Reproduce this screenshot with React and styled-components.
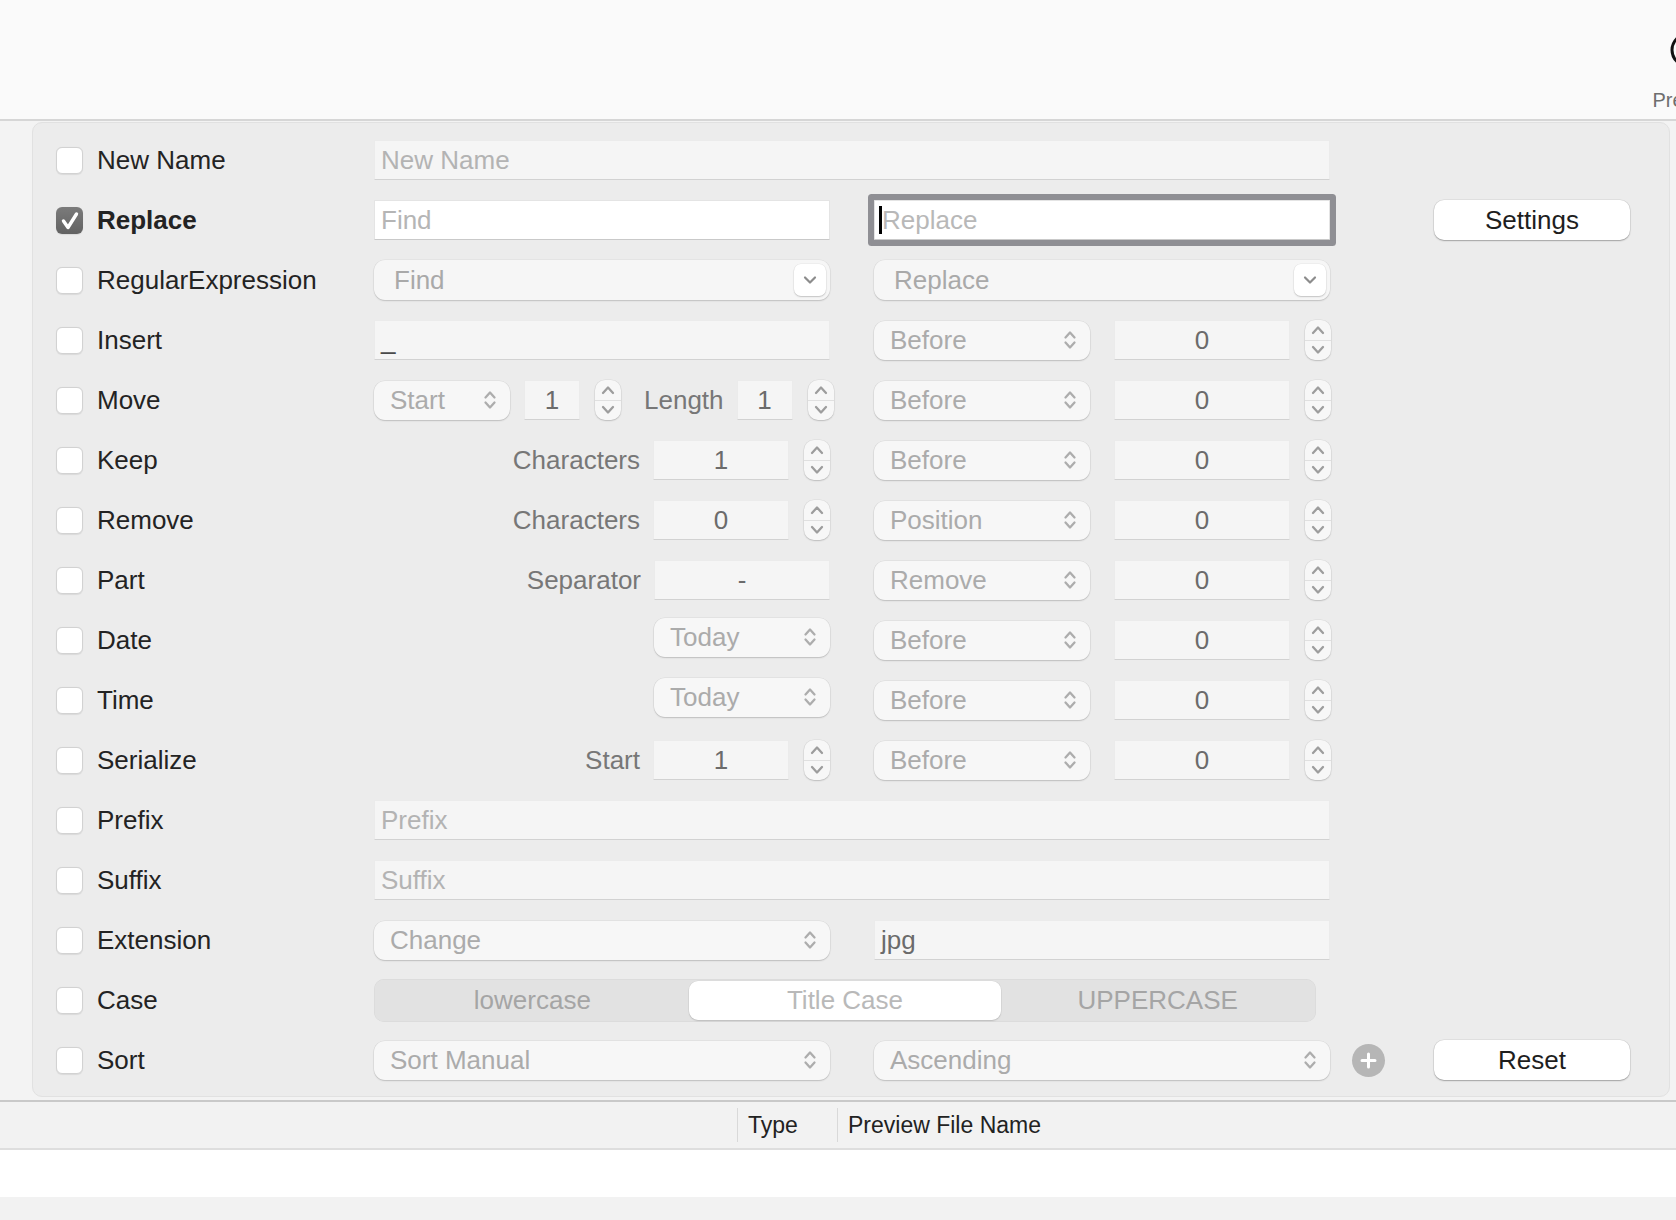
import React from "react";
import styled, { createGlobalStyle } from "styled-components";

const GlobalStyle = createGlobalStyle`
  html, body {
    margin: 0;
    padding: 0;
  }
  body {
    background: #f3f3f3;
    font-family: "Liberation Sans", Arial, sans-serif;
    -webkit-font-smoothing: antialiased;
  }
  * {
    box-sizing: border-box;
  }
`;

const UpDown = ({ color = "#adadad" }) => (
  <svg width="14" height="22" viewBox="0 0 14 22" fill="none">
    <path d="M2.5 8.5 L7 3.5 L11.5 8.5" stroke={color} strokeWidth="2.3" strokeLinecap="round" strokeLinejoin="round" />
    <path d="M2.5 13.5 L7 18.5 L11.5 13.5" stroke={color} strokeWidth="2.3" strokeLinecap="round" strokeLinejoin="round" />
  </svg>
);

const ChevronDown = () => (
  <svg width="14" height="10" viewBox="0 0 14 10" fill="none">
    <path d="M2 2.5 L7 7.5 L12 2.5" stroke="#8c8c8c" strokeWidth="2.2" strokeLinecap="round" strokeLinejoin="round" />
  </svg>
);

const ChevronSmall = ({ up }) => (
  <svg width="14" height="10" viewBox="0 0 14 10" fill="none">
    <path
      d={up ? "M2 8 L7 2.5 L12 8" : "M2 2 L7 7.5 L12 2"}
      stroke="#9d9d9d"
      strokeWidth="2.3"
      strokeLinecap="round"
      strokeLinejoin="round"
    />
  </svg>
);

const CheckMark = () => (
  <svg width="27" height="27" viewBox="0 0 27 27" fill="none">
    <path d="M7.5 14 L12 20.5 L20.5 7" stroke="#fff" strokeWidth="3.4" strokeLinecap="round" strokeLinejoin="round" />
  </svg>
);

const PlusMark = () => (
  <svg width="17" height="17" viewBox="0 0 17 17" fill="none">
    <path d="M8.5 2 V15 M2 8.5 H15" stroke="#fff" strokeWidth="3" strokeLinecap="round" />
  </svg>
);

// number field with its up/down stepper
const NumberSpin = ({ w, value }) => (
  <SpinWrap>
    <Field $w={w} $center $tone="#6b6b6b">{value}</Field>
    <Stepper>
      <StepHalf><ChevronSmall up /></StepHalf>
      <StepHalf $bottom><ChevronSmall /></StepHalf>
    </Stepper>
  </SpinWrap>
);

const PopupButton = ({ w, label, mr, lift }) => (
  <Popup $w={w} $mr={mr} $lift={lift}>
    <span>{label}</span>
    <UpDown />
  </Popup>
);

const PositionGroup = ({ label }) => (
  <Side>
    <PopupButton w={216} label={label} mr={24} />
    <NumberSpin w={176} value="0" />
  </Side>
);

const RuleRow = ({ label, checked, children }) => (
  <Row>
    <Lead>
      <Check $on={checked}>{checked && <CheckMark />}</Check>
      <RowLabel $bold={checked}>{label}</RowLabel>
    </Lead>
    {children}
  </Row>
);

export default function App() {
  return (
    <>
      <GlobalStyle />
      <Window>
        <Toolbar>
          <ToolItem>
            <svg width="36" height="36" viewBox="0 0 36 36" fill="none">
              <circle cx="18" cy="18" r="16" stroke="#111" strokeWidth="3" />
            </svg>
            <ToolLabel>Preview</ToolLabel>
          </ToolItem>
        </Toolbar>

        <Panel>
          <RuleRow label="New Name">
            <Main $w={956}>
              <Field $w={956} $tone="#b3b3b3">New Name</Field>
            </Main>
          </RuleRow>

          <RuleRow label="Replace" checked>
            <Main>
              <Field $w={456} $white $tone="#b5b5b5">Find</Field>
            </Main>
            <Side>
              <Field $w={456} $white $focus $tone="#b8b8b8">
                <Caret />
                Replace
              </Field>
            </Side>
            <Extra />
            <Action>
              <PushButton>Settings</PushButton>
            </Action>
          </RuleRow>

          <RuleRow label="RegularExpression">
            <Main>
              <Combo>
                <ComboText>Find</ComboText>
                <ComboButton><ChevronDown /></ComboButton>
              </Combo>
            </Main>
            <Side>
              <Combo>
                <ComboText>Replace</ComboText>
                <ComboButton><ChevronDown /></ComboButton>
              </Combo>
            </Side>
          </RuleRow>

          <RuleRow label="Insert">
            <Main>
              <Field $w={456} $tone="#4a4a4a">_</Field>
            </Main>
            <PositionGroup label="Before" />
          </RuleRow>

          <RuleRow label="Move">
            <Main>
              <PopupButton w={136} label="Start" mr={14} />
              <NumberSpin w={56} value="1" />
              <SubLabel $ml={23}>Length</SubLabel>
              <NumberSpin w={56} value="1" />
            </Main>
            <PositionGroup label="Before" />
          </RuleRow>

          <RuleRow label="Keep">
            <Main $end>
              <SubLabel>Characters</SubLabel>
              <NumberSpin w={136} value="1" />
            </Main>
            <PositionGroup label="Before" />
          </RuleRow>

          <RuleRow label="Remove">
            <Main $end>
              <SubLabel>Characters</SubLabel>
              <NumberSpin w={136} value="0" />
            </Main>
            <PositionGroup label="Position" />
          </RuleRow>

          <RuleRow label="Part">
            <Main $end>
              <SubLabel>Separator</SubLabel>
              <Field $w={176} $center $tone="#6b6b6b">-</Field>
            </Main>
            <PositionGroup label="Remove" />
          </RuleRow>

          <RuleRow label="Date">
            <Main $end>
              <PopupButton w={176} label="Today" lift />
            </Main>
            <PositionGroup label="Before" />
          </RuleRow>

          <RuleRow label="Time">
            <Main $end>
              <PopupButton w={176} label="Today" lift />
            </Main>
            <PositionGroup label="Before" />
          </RuleRow>

          <RuleRow label="Serialize">
            <Main $end>
              <SubLabel>Start</SubLabel>
              <NumberSpin w={136} value="1" />
            </Main>
            <PositionGroup label="Before" />
          </RuleRow>

          <RuleRow label="Prefix">
            <Main $w={956}>
              <Field $w={956} $tone="#b3b3b3">Prefix</Field>
            </Main>
          </RuleRow>

          <RuleRow label="Suffix">
            <Main $w={956}>
              <Field $w={956} $tone="#b3b3b3">Suffix</Field>
            </Main>
          </RuleRow>

          <RuleRow label="Extension">
            <Main>
              <PopupButton w={456} label="Change" />
            </Main>
            <Side>
              <Field $w={456} $tone="#6b6b6b">jpg</Field>
            </Side>
          </RuleRow>

          <RuleRow label="Case">
            <Main $w={942}>
              <Segmented>
                <Segment>lowercase</Segment>
                <Segment $on>Title Case</Segment>
                <Segment>UPPERCASE</Segment>
              </Segmented>
            </Main>
          </RuleRow>

          <RuleRow label="Sort">
            <Main>
              <PopupButton w={456} label="Sort Manual" />
            </Main>
            <Side>
              <PopupButton w={456} label="Ascending" />
            </Side>
            <Extra>
              <AddButton><PlusMark /></AddButton>
            </Extra>
            <Action>
              <PushButton>Reset</PushButton>
            </Action>
          </RuleRow>
        </Panel>

        <TableHeader>
          <HeaderCell $w={737} $plain />
          <HeaderCell $w={100}>Type</HeaderCell>
          <HeaderCell $w={400}>Preview File Name</HeaderCell>
        </TableHeader>
        <ListBody />
        <Footer />
      </Window>
    </>
  );
}

const Window = styled.div`
  width: 1676px;
  height: 1220px;
  display: flex;
  flex-direction: column;
  overflow: hidden;
  background: #f3f3f3;
`;

const Toolbar = styled.div`
  flex: none;
  height: 121px;
  background: #fafafa;
  border-bottom: 2px solid #d6d6d6;
  display: flex;
  justify-content: flex-end;
  align-items: flex-start;
  overflow: hidden;
`;

const ToolItem = styled.div`
  flex: none;
  width: 72px;
  margin-right: -48px;
  padding-top: 32px;
  display: flex;
  flex-direction: column;
  align-items: center;
  gap: 20px;
`;

const ToolLabel = styled.div`
  font-size: 20px;
  line-height: 24px;
  color: #6e6e6e;
`;

const Panel = styled.div`
  flex: none;
  margin: 1px 6px 3px 32px;
  padding: 7px 0 6px 23px;
  background: #ececec;
  border: 1px solid #e1e1e1;
  border-radius: 10px;
  display: flex;
  flex-direction: column;
`;

const Row = styled.div`
  height: 60px;
  display: flex;
  align-items: center;
`;

const Lead = styled.div`
  flex: none;
  width: 318px;
  display: flex;
  align-items: center;
  gap: 14px;
`;

const Check = styled.div`
  width: 27px;
  height: 27px;
  border-radius: 6px;
  background: ${(p) => (p.$on ? "linear-gradient(#7b7b7b, #626262)" : "#fff")};
  border: ${(p) => (p.$on ? "none" : "1px solid #d2d2d2")};
  box-shadow: 0 0.5px 1px rgba(0, 0, 0, 0.08);
  display: flex;
  align-items: center;
  justify-content: center;
`;

const RowLabel = styled.div`
  font-size: 26px;
  color: #232323;
  font-weight: ${(p) => (p.$bold ? 700 : 400)};
  white-space: nowrap;
`;

const Main = styled.div`
  flex: none;
  width: ${(p) => p.$w || 456}px;
  display: flex;
  align-items: center;
  justify-content: ${(p) => (p.$end ? "flex-end" : "flex-start")};
`;

const Side = styled.div`
  flex: none;
  width: 456px;
  margin-left: 44px;
  display: flex;
  align-items: center;
`;

const Extra = styled.div`
  flex: none;
  width: 104px;
  padding-left: 22px;
  display: flex;
  align-items: center;
`;

const Action = styled.div`
  flex: none;
  width: 196px;
`;

const Field = styled.div`
  flex: none;
  width: ${(p) => p.$w}px;
  height: 40px;
  padding: 0 6px;
  background: ${(p) => (p.$white ? "#fff" : "#f5f5f5")};
  border: 1px solid ${(p) => (p.$white ? "#e4e4e4" : "#ebebeb")};
  border-bottom-color: ${(p) => (p.$white ? "#c9c9c9" : "#d2d2d2")};
  border-radius: 1px;
  box-shadow: ${(p) => (p.$focus ? "0 0 0 6px #8f8f94" : "none")};
  display: flex;
  align-items: center;
  justify-content: ${(p) => (p.$center ? "center" : "flex-start")};
  font-size: 26px;
  color: ${(p) => p.$tone};
  white-space: nowrap;
`;

const Caret = styled.span`
  width: 3px;
  height: 28px;
  margin: 0 0 0 -2px;
  background: #000;
  flex: none;
`;

const Combo = styled.div`
  width: 456px;
  height: 40px;
  padding: 0 4px 0 20px;
  border-radius: 11px;
  background: #f6f6f6;
  box-shadow: 0 1px 1.5px rgba(0, 0, 0, 0.16), 0 0 0 0.5px rgba(0, 0, 0, 0.06);
  display: flex;
  align-items: center;
  font-size: 26px;
  color: #a9a9a9;
`;

const ComboText = styled.span`
  flex: 1;
`;

const ComboButton = styled.div`
  width: 32px;
  height: 32px;
  border-radius: 7px;
  background: #fff;
  box-shadow: 0 1px 1.5px rgba(0, 0, 0, 0.18), 0 0 0 0.5px rgba(0, 0, 0, 0.06);
  display: flex;
  align-items: center;
  justify-content: center;
`;

const Popup = styled.div`
  flex: none;
  width: ${(p) => p.$w}px;
  height: 39px;
  margin-right: ${(p) => p.$mr || 0}px;
  margin-top: ${(p) => (p.$lift ? "-6px" : "0")};
  padding: 0 13px 0 16px;
  border-radius: 11px;
  background: #f7f7f7;
  box-shadow: 0 1px 1.5px rgba(0, 0, 0, 0.16), 0 0 0 0.5px rgba(0, 0, 0, 0.07);
  display: flex;
  align-items: center;
  justify-content: space-between;
  font-size: 26px;
  color: #ababab;
  white-space: nowrap;
`;

const SpinWrap = styled.div`
  flex: none;
  display: flex;
  align-items: center;
  gap: 15px;
`;

const Stepper = styled.div`
  width: 26px;
  height: 40px;
  border-radius: 10px;
  background: #f7f7f7;
  box-shadow: 0 1px 1.5px rgba(0, 0, 0, 0.16), 0 0 0 0.5px rgba(0, 0, 0, 0.07);
  display: flex;
  flex-direction: column;
`;

const StepHalf = styled.div`
  flex: 1;
  display: flex;
  align-items: center;
  justify-content: center;
  border-top: ${(p) => (p.$bottom ? "1px solid #e0e0e0" : "none")};
`;

const SubLabel = styled.div`
  flex: none;
  margin: 0 13px 0 ${(p) => p.$ml || 0}px;
  font-size: 26px;
  color: #777;
  white-space: nowrap;
`;

const Segmented = styled.div`
  width: 942px;
  height: 43px;
  padding: 2px;
  border-radius: 10px;
  background: #e2e2e2;
  box-shadow: inset 0 0 0 0.5px rgba(0, 0, 0, 0.05);
  display: grid;
  grid-template-columns: repeat(3, 1fr);
`;

const Segment = styled.div`
  border-radius: 9px;
  background: ${(p) => (p.$on ? "#fff" : "transparent")};
  box-shadow: ${(p) => (p.$on ? "0 1px 1.5px rgba(0,0,0,0.14), 0 0 0 0.5px rgba(0,0,0,0.05)" : "none")};
  display: flex;
  align-items: center;
  justify-content: center;
  font-size: 26px;
  color: ${(p) => (p.$on ? "#b9b9b9" : "#a5a5a5")};
`;

const PushButton = styled.div`
  width: 196px;
  height: 40px;
  border-radius: 10px;
  background: #fff;
  box-shadow: 0 1px 1.5px rgba(0, 0, 0, 0.28), 0 0 0 0.5px rgba(0, 0, 0, 0.1);
  display: flex;
  align-items: center;
  justify-content: center;
  font-size: 26px;
  color: #1e1e1e;
`;

const AddButton = styled.div`
  width: 33px;
  height: 33px;
  border-radius: 50%;
  background: #b6b6b6;
  display: flex;
  align-items: center;
  justify-content: center;
`;

const TableHeader = styled.div`
  flex: none;
  height: 50px;
  background: #f2f2f2;
  border-top: 2px solid #c9c9c9;
  border-bottom: 2px solid #dedede;
  display: flex;
  align-items: center;
`;

const HeaderCell = styled.div`
  flex: none;
  width: ${(p) => p.$w}px;
  height: 34px;
  padding-left: 10px;
  border-left: ${(p) => (p.$plain ? "none" : "1px solid #d9d9d9")};
  display: flex;
  align-items: center;
  font-size: 23px;
  color: #222;
  white-space: nowrap;
`;

const ListBody = styled.div`
  flex: none;
  height: 47px;
  background: #fff;
`;

const Footer = styled.div`
  flex: 1;
  background: #f2f2f2;
`;
